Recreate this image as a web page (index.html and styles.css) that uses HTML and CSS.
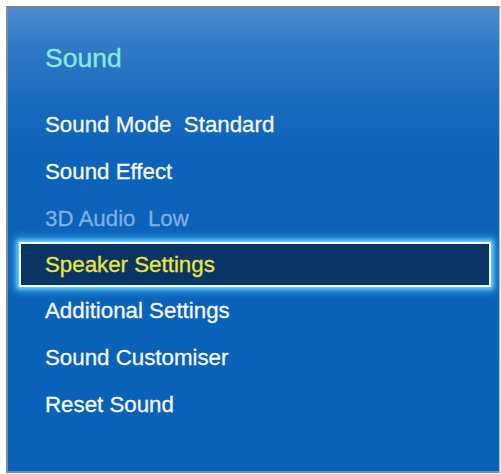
FILE: index.html
```html
<!DOCTYPE html>
<html>
<head>
<meta charset="utf-8">
<link rel="stylesheet" href="styles.css">
</head>
<body>
<div class="panel">
  <div class="title">Sound</div>
  <ul class="menu">
    <li class="item">Sound Mode&nbsp; Standard</li>
    <li class="item">Sound Effect</li>
    <li class="item disabled">3D Audio&nbsp; Low</li>
    <li class="item selected">Speaker Settings</li>
    <li class="item">Additional Settings</li>
    <li class="item">Sound Customiser</li>
    <li class="item">Reset Sound</li>
  </ul>
</div>
</body>
</html>
```
FILE: styles.css
```css
html, body {
  margin: 0;
  padding: 0;
  background: #ffffff;
}
body {
  width: 501px;
  height: 474px;
  overflow: hidden;
  font-family: "Liberation Sans", Arial, sans-serif;
}
.panel {
  box-sizing: border-box;
  margin: 6px 0 0 6px;
  width: 494px;
  height: 467px;
  border-top: 2px solid #6f8295;
  border-left: 2px solid #7a8da0;
  border-bottom: 2px solid #6f8fb0;
  border-right: 1px solid #9cc4ea;
  padding-top: 30px;
  background: linear-gradient(to bottom, #4c8bce 0px, #3079c6 40px, #186ac0 95px, #0c63b9 150px, #0962b8 100%);
}
.title {
  height: 40px;
  line-height: 40px;
  padding-left: 37px;
  font-size: 26.5px;
  color: #86ece2;
  -webkit-text-stroke: 0.3px #86ece2;
}
.menu {
  list-style: none;
  margin: 23px 8px 0 11px;
  padding: 0;
}
.item {
  box-sizing: border-box;
  height: 47px;
  line-height: 43px;
  border: 2px solid transparent;
  padding-left: 24px;
  font-size: 22.3px;
  color: #f6f9ff;
  -webkit-text-stroke: 0.3px currentColor;
  white-space: nowrap;
}
.item.disabled {
  color: #7eb0e2;
}
.item.selected {
  height: 45px;
  line-height: 41px;
  background: #0b3566;
  border-color: #ffffff;
  color: #ece53a;
  box-shadow: 0 0 4px 2px rgba(110, 215, 255, 1), 0 0 9px 4px rgba(70, 180, 250, 0.8);
}
```
